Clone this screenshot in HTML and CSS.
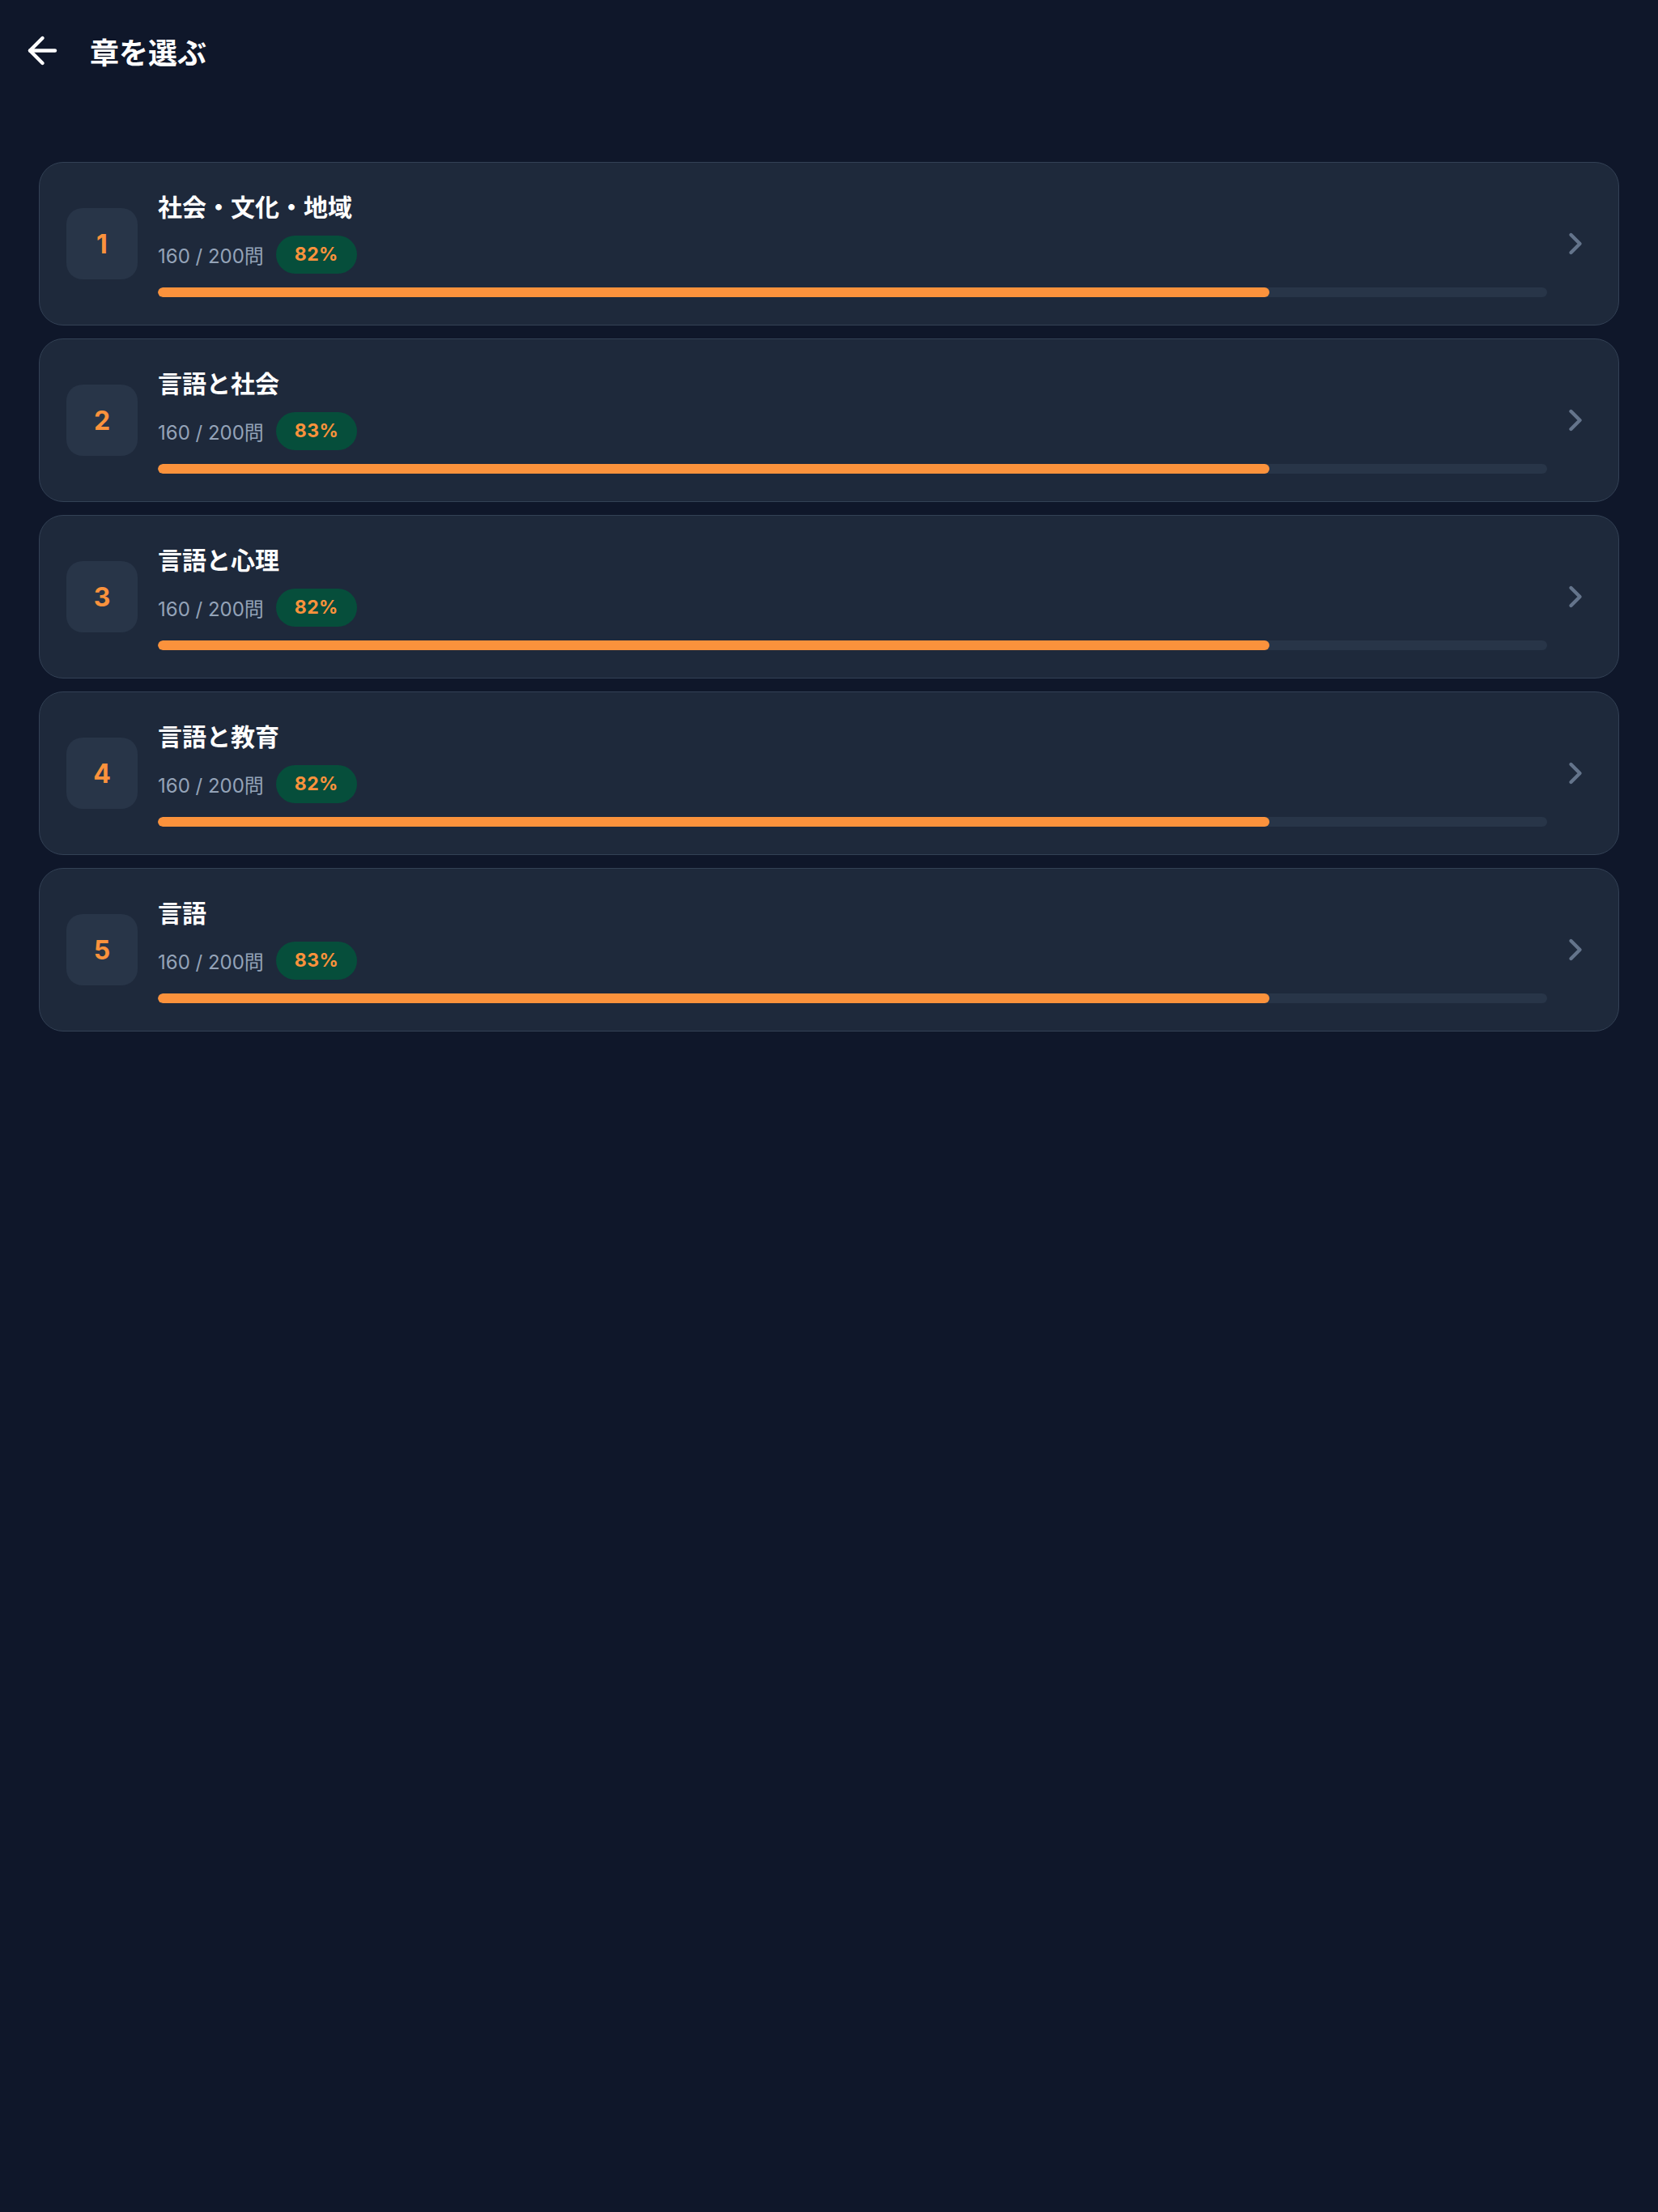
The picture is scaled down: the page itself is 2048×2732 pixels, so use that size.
FILE: index.html
```html
<!DOCTYPE html>
<html lang="ja">
<head>
<meta charset="utf-8">
<title>章を選ぶ</title>
<link rel="stylesheet" href="styles.css">
</head>
<body>
<header class="topbar">
  <button class="back" aria-label="戻る">
    <svg viewBox="0 0 24 24" width="53" height="53" fill="none" stroke="currentColor" stroke-width="2" stroke-linecap="round" stroke-linejoin="round"><path d="M19 12H5"/><path d="M12 19l-7-7 7-7"/></svg>
  </button>
  <h1 class="title">章を選ぶ</h1>
</header>
<main class="list">
  <a class="card">
    <div class="num">1</div>
    <div class="body">
      <div class="name">社会・文化・地域</div>
      <div class="meta"><span class="count">160 / 200問</span><span class="badge">82%</span></div>
      <div class="track"><div class="fill" style="width:80%"></div></div>
    </div>
    <svg class="chev" viewBox="0 0 24 24" width="44" height="44" fill="none" stroke="currentColor" stroke-width="2.4" stroke-linecap="round" stroke-linejoin="round"><path d="M9 6l6 6-6 6"/></svg>
  </a>
  <a class="card">
    <div class="num">2</div>
    <div class="body">
      <div class="name">言語と社会</div>
      <div class="meta"><span class="count">160 / 200問</span><span class="badge">83%</span></div>
      <div class="track"><div class="fill" style="width:80%"></div></div>
    </div>
    <svg class="chev" viewBox="0 0 24 24" width="44" height="44" fill="none" stroke="currentColor" stroke-width="2.4" stroke-linecap="round" stroke-linejoin="round"><path d="M9 6l6 6-6 6"/></svg>
  </a>
  <a class="card">
    <div class="num">3</div>
    <div class="body">
      <div class="name">言語と心理</div>
      <div class="meta"><span class="count">160 / 200問</span><span class="badge">82%</span></div>
      <div class="track"><div class="fill" style="width:80%"></div></div>
    </div>
    <svg class="chev" viewBox="0 0 24 24" width="44" height="44" fill="none" stroke="currentColor" stroke-width="2.4" stroke-linecap="round" stroke-linejoin="round"><path d="M9 6l6 6-6 6"/></svg>
  </a>
  <a class="card">
    <div class="num">4</div>
    <div class="body">
      <div class="name">言語と教育</div>
      <div class="meta"><span class="count">160 / 200問</span><span class="badge">82%</span></div>
      <div class="track"><div class="fill" style="width:80%"></div></div>
    </div>
    <svg class="chev" viewBox="0 0 24 24" width="44" height="44" fill="none" stroke="currentColor" stroke-width="2.4" stroke-linecap="round" stroke-linejoin="round"><path d="M9 6l6 6-6 6"/></svg>
  </a>
  <a class="card">
    <div class="num">5</div>
    <div class="body">
      <div class="name">言語</div>
      <div class="meta"><span class="count">160 / 200問</span><span class="badge">83%</span></div>
      <div class="track"><div class="fill" style="width:80%"></div></div>
    </div>
    <svg class="chev" viewBox="0 0 24 24" width="44" height="44" fill="none" stroke="currentColor" stroke-width="2.4" stroke-linecap="round" stroke-linejoin="round"><path d="M9 6l6 6-6 6"/></svg>
  </a>
</main>
</body>
</html>
```

FILE: styles.css
```css
* { box-sizing: border-box; }
html, body {
  margin: 0;
  padding: 0;
  background: #0f172a;
  min-height: 100%;
}
body {
  font-family: Inter, "Noto Sans CJK JP", sans-serif;
  color: #f8fafc;
  min-height: 2732px;
}
.topbar {
  height: 128px;
  display: flex;
  align-items: center;
  padding: 0 0 3px 26px;
  gap: 32px;
}
.back {
  width: 53px;
  height: 53px;
  padding: 0;
  margin: 0;
  border: 0;
  background: none;
  color: #ffffff;
  display: flex;
  align-items: center;
  justify-content: center;
}
.title {
  margin: 0;
  font-family: "Noto Sans CJK JP", sans-serif;
  font-size: 36px;
  font-weight: 700;
  line-height: 1;
  color: #ffffff;
}
.list {
  margin-top: 72px;
  padding: 0 48px;
  display: flex;
  flex-direction: column;
  gap: 16px;
}
.card {
  display: flex;
  align-items: center;
  height: 202px;
  background: #1e293b;
  border: 1.5px solid #334155;
  border-radius: 30px;
  padding: 0 31px 0 33px;
}
.num {
  width: 88px;
  height: 88px;
  flex: none;
  border-radius: 20px;
  background: #283548;
  color: #fb923c;
  font-family: Inter, sans-serif;
  font-weight: 700;
  font-size: 32px;
  display: flex;
  align-items: center;
  justify-content: center;
}
.body {
  flex: 1;
  margin-left: 25px;
  display: flex;
  flex-direction: column;
}
.name {
  margin-top: -2px;
  font-family: "Noto Sans CJK JP", sans-serif;
  font-size: 30px;
  font-weight: 700;
  line-height: 40px;
  color: #ffffff;
}
.meta {
  margin-top: 17px;
  display: flex;
  align-items: center;
  gap: 15px;
}
.count {
  font-family: Inter, "Noto Sans CJK JP", sans-serif;
  font-size: 24px;
  color: #94a3b8;
}
.badge {
  height: 47px;
  padding: 0 23px;
  border-radius: 24px;
  background: #064e3b;
  color: #fb923c;
  font-family: Inter, sans-serif;
  font-weight: 700;
  font-size: 23px;
  letter-spacing: 0.4px;
  display: flex;
  align-items: center;
}
.track {
  margin-top: 17px;
  height: 12px;
  border-radius: 6px;
  background: #283548;
  overflow: hidden;
}
.fill {
  height: 100%;
  border-radius: 6px;
  background: #fb923c;
}
.chev {
  flex: none;
  margin-left: 13px;
  color: #64748b;
}
```
